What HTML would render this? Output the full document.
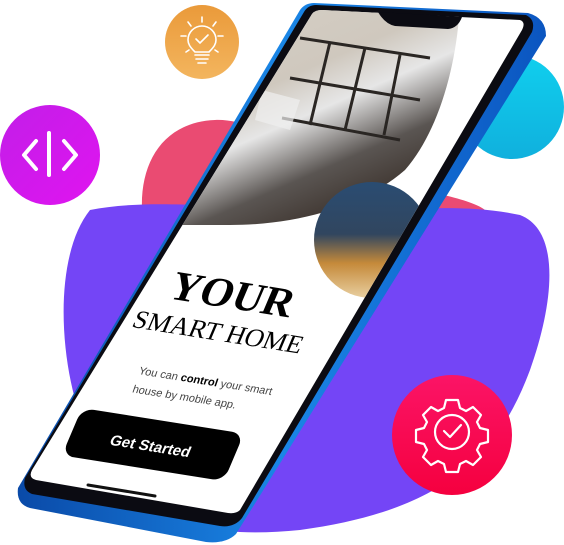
<!DOCTYPE html>
<html><head><meta charset="utf-8"><style>
html,body{margin:0;padding:0;background:#fff;width:564px;height:545px;overflow:hidden}
svg{display:block}
</style></head><body>
<svg width="564" height="545" viewBox="0 0 564 545" xmlns="http://www.w3.org/2000/svg">
<defs>
<linearGradient id="pur" x1="0" y1="0" x2="1" y2="1"><stop offset="0" stop-color="#c21ee8"/><stop offset="1" stop-color="#e014f0"/></linearGradient>
<linearGradient id="org" x1="0" y1="0" x2="0" y2="1"><stop offset="0" stop-color="#ea9a3a"/><stop offset="1" stop-color="#f3b55e"/></linearGradient>
<linearGradient id="red" x1="0" y1="0" x2="0" y2="1"><stop offset="0" stop-color="#fb1466"/><stop offset="1" stop-color="#f5003f"/></linearGradient>
<linearGradient id="cy" x1="0" y1="0" x2="0" y2="1"><stop offset="0" stop-color="#10cfee"/><stop offset="1" stop-color="#10b0dd"/></linearGradient>
<linearGradient id="frame" x1="0" y1="0" x2="1" y2="0"><stop offset="0" stop-color="#0a4aa8"/><stop offset="0.5" stop-color="#1a86e6"/><stop offset="1" stop-color="#0b55c0"/></linearGradient>
<linearGradient id="ph1" x1="0" y1="0" x2="0.6" y2="1"><stop offset="0" stop-color="#d8d2c8"/><stop offset="0.45" stop-color="#cfc8be"/><stop offset="0.6" stop-color="#e6e6e6"/><stop offset="0.8" stop-color="#5a5552"/><stop offset="1" stop-color="#3a302a"/></linearGradient>
<linearGradient id="ph2" x1="0" y1="0" x2="0" y2="1"><stop offset="0" stop-color="#2a4c72"/><stop offset="0.45" stop-color="#31465f"/><stop offset="0.7" stop-color="#c58a3a"/><stop offset="1" stop-color="#e8cfa0"/></linearGradient>
<clipPath id="scr"><path d="M322 10 L520 20 Q526 22 522 30 L240 510 Q236 514 228 513 L36 480 Q28 478 32 470 L312 14 Q315 10 322 10 Z"/></clipPath>
</defs>
<circle cx="512" cy="107" r="52" fill="url(#cy)"/>
<path d="M142 210 C140 160 165 122 215 120 C260 118 300 160 380 180 C440 195 480 200 490 215 L490 240 L142 240 Z" fill="#ea4b72"/>
<path d="M90 210 C140 200 200 205 300 210 C380 215 450 200 520 215 C560 230 555 300 530 370 C500 450 450 510 300 530 C200 540 130 520 90 440 C60 380 50 260 90 210 Z" fill="#7445f6"/>
<circle cx="202" cy="42" r="37" fill="url(#org)"/>
<g stroke="#fff" stroke-width="1.6" fill="none" stroke-linecap="round">
<path d="M195 52 C190 47 188 44 188 40 A14 14 0 0 1 216 40 C216 44 214 47 209 52 Z"/>
<path d="M195 55h14M196 59h12M198 63h8"/>
<path d="M196 39l4 4 8-8"/>
<path d="M202 17v5M188 22l3 4M216 22l-3 4M181 36h5M223 36h-5M186 52l3-2M218 52l-3-2"/>
</g>
<circle cx="50" cy="155" r="50" fill="url(#pur)"/>
<g stroke="#fff" stroke-width="4" fill="none" stroke-linecap="round" stroke-linejoin="round">
<path d="M36 141 L24 155 L36 169"/><path d="M64 141 L76 155 L64 169"/><path d="M49 133 V175"/>
</g>
<circle cx="452" cy="435" r="60" fill="url(#red)"/>
<g stroke="#fff" stroke-width="2.2" fill="none" stroke-linejoin="round">
<path d="M446 400 h12 l2 8 6 3 7-4 8 8 -4 7 3 6 8 2 v12 l-8 2 -3 6 4 7 -8 8 -7-4 -6 3 -2 8 h-12 l-2-8 -6-3 -7 4 -8-8 4-7 -3-6 -8-2 v-12 l8-2 3-6 -4-7 8-8 7 4 6-3 z"/>
<circle cx="452" cy="432" r="17"/>
<path d="M444 431 l6 6 11-12" stroke-linecap="round"/>
</g>
<path d="M314 3 L528 13 Q546 18 546 36 L236 534 Q226 544 206 542 L30 508 Q16 504 18 488 L300 10 Q305 3 314 3 Z" fill="url(#frame)"/>
<path d="M316 5 L526 15 Q536 20 532 32 L242 518 Q234 528 220 526 L32 494 Q22 490 25 478 L304 12 Q308 5 316 5 Z" fill="#0b0b12"/>
<g clip-path="url(#scr)">
<rect x="0" y="0" width="564" height="545" fill="#fff"/>
<path d="M250 0 L460 0 C458 60 440 130 405 170 C365 205 300 225 230 225 L150 225 Z" fill="url(#ph1)"/>
<g stroke="#2a2623" stroke-width="3" fill="none"><path d="M300 38 L430 58 M290 78 L420 100 M282 118 L400 140 M330 42 L310 125 M365 48 L345 130 M400 55 L384 135"/></g>
<path d="M262 90 L300 100 L290 130 L255 120 Z" fill="#f0f0f0" opacity="0.7"/>
<circle cx="372" cy="240" r="58" fill="url(#ph2)"/>
<g transform="translate(166,298) rotate(9) skewX(-14)" font-family="Liberation Serif, serif">
<text x="0" y="0" font-size="42" font-weight="bold" fill="#000">YOUR</text>
<text x="-22" y="34" font-size="26" fill="#000">SMART HOME</text>
</g>
<g transform="translate(138,374) rotate(9) skewX(-10)" font-family="Liberation Sans, sans-serif" font-size="11" fill="#444">
<text x="0" y="0">You can <tspan font-weight="bold" fill="#000">control</tspan> your smart</text>
<text x="0" y="19">house by mobile app.</text>
</g>
<g transform="translate(82,408) rotate(9) skewX(-14)">
<rect x="0" y="0" width="164" height="50" rx="12" fill="#000"/>
<text x="40" y="32" font-family="Liberation Sans, sans-serif" font-size="15" fill="#fff" font-weight="bold">Get Started</text>
</g>
</g>
<path d="M378 12 L462 17 Q458 28 448 29 L395 26 Q385 24 378 12 Z" fill="#0b0b12"/>
<path d="M88 485 L155 496" stroke="#111" stroke-width="3" stroke-linecap="round"/>
</svg>
</body></html>
